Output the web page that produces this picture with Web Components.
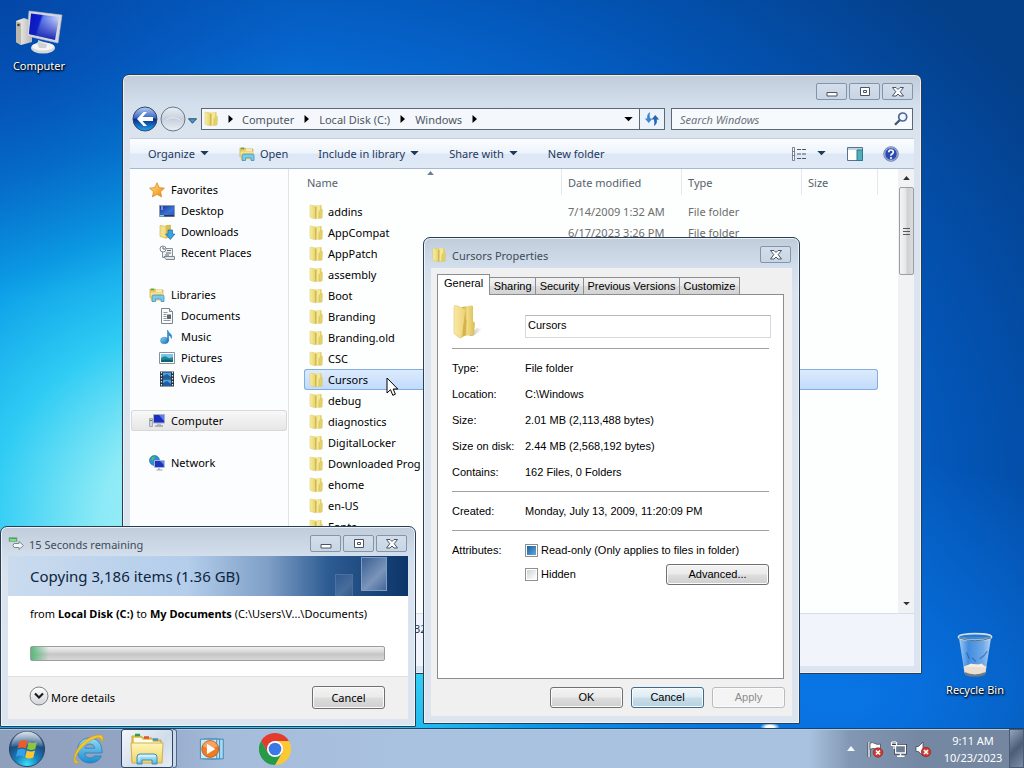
<!DOCTYPE html>
<html lang="en">
<head>
<meta charset="utf-8">
<title>Desktop</title>
<style>
  html, body { margin: 0; height: 100%; overflow: hidden; }
  body { font: 11px/21px "Noto Sans", "Open Sans", sans-serif; color: #000; }
</style>
</head>
<body>
<win-desktop></win-desktop>
<script>
const define = (name, css, html, setup) => {
  const t = document.createElement('template');
  t.innerHTML = `<style>*{box-sizing:border-box}${css}</style>${html}`;
  customElements.define(name, class extends HTMLElement {
    connectedCallback() {
      if (this.shadowRoot) return;
      const root = this.attachShadow({ mode: 'open' });
      root.append(t.content.cloneNode(true));
      if (setup) setup(this, root);
    }
  });
};

/* ---------- icons ---------- */
const ICONS = {
  folder: ['0 0 16 16', `<defs><linearGradient id="a" x2="1"><stop stop-color="#f8efa4"/><stop offset="1" stop-color="#e6d060"/></linearGradient><linearGradient id="b" x2="1" y2="1"><stop stop-color="#f3e696"/><stop offset="1" stop-color="#d0b43e"/></linearGradient></defs>
    <path d="M7 1.500l6-.5q.6 0 .6.700V5l1 .5-.3 8.500-1.300.5H8z" fill="url(#b)"/><path d="M9 1.400l3-.2V6l-1.500 1.500V14H8z" fill="#f3e898"/><path d="M11.300 7l2.400-1.500.6.500-.3 7.500-2.700 1z" fill="#e2d068"/><path d="M2 1.600q0-.6.600-.5l4.600.9q.6.100.6.700v11.600q0 .8-.7.500l-4.600-1.400q-.5-.2-.5-.7z" fill="url(#a)" stroke="#d9c66c" stroke-width=".5"/><path d="M7.800 3v11.500" stroke="#c0a038" stroke-width=".7"/>`],
  bigfolder: ['0 0 32 36', `<defs><linearGradient id="a" x2="1"><stop stop-color="#f8e9a4"/><stop offset="1" stop-color="#edd274"/></linearGradient><linearGradient id="b" x2="1"><stop stop-color="#c69b33"/><stop offset=".4" stop-color="#f1dc88"/><stop offset="1" stop-color="#dcbc52"/></linearGradient><linearGradient id="c" x2="1"><stop stop-color="#888" stop-opacity=".7"/><stop offset="1" stop-color="#aaa" stop-opacity="0"/></linearGradient></defs>
    <path d="M17 32l8-8 6 1-10 7z" fill="url(#c)"/><path d="M10 3l9-1.500 2 .5v15l2 2-1 12-11 1z" fill="url(#b)"/><path d="M2 3q0-2 2-1.500l8 3q1.500.5 1.500 2L10 33q-.5 1.500-2 1l-4.500-3Q2 30 2 28z" fill="url(#a)" stroke="#dfc66e" stroke-width=".6"/><path d="M13.500 6v8l1 3-1 14-3.500 2.500z" fill="#d7b247"/>`],
  explorer: ['0 0 36 32', `<defs><linearGradient id="a" y2="1" x2="0"><stop stop-color="#fff6b8"/><stop offset="1" stop-color="#efd266"/></linearGradient><linearGradient id="b" y2="1" x2="0"><stop stop-color="#d5f2fb"/><stop offset="1" stop-color="#4fb0dc"/></linearGradient></defs>
    <path d="M3 3h9l2 2h9l1 2h8v22H3z" fill="#e9c95c" stroke="#c9a43a"/><path d="M6 2h5" stroke="#2f9e4c" stroke-width="2.500"/><path d="M15 4.500h5" stroke="#d95338" stroke-width="2.500"/><path d="M24 6.500h5" stroke="#3c93d4" stroke-width="2.500"/><path d="M5 5h7l2 2h9l1 2h7v3H5z" fill="#fffef0"/><path d="M2 10h32l-1 20H3z" fill="url(#a)" stroke="#d3b04a"/><path d="M8 31v-7q0-3 3-3h14q3 0 3 3v7h-5v-4H13v4z" fill="url(#b)" stroke="#3a92c2"/><path d="M10 29v-6h16" stroke="#fff" fill="none" opacity=".7"/>`],
  star: ['0 0 16 16', `<defs><linearGradient id="a" x2="1" y2="1"><stop stop-color="#ffe87a"/><stop offset="1" stop-color="#f08410"/></linearGradient></defs><path d="M8 .8l2.200 4.800 5.200.6-3.900 3.500 1.100 5.200L8 12.300 3.400 14.900l1.100-5.200L.6 6.200l5.200-.6z" fill="url(#a)" stroke="#d9882b" stroke-width=".8"/>`],
  desktop: ['0 0 16 16', `<defs><linearGradient id="a" x2="1" y2="1"><stop stop-color="#16308e"/><stop offset=".6" stop-color="#3a74d6"/><stop offset="1" stop-color="#2453b6"/></linearGradient></defs><path d="M.5 2.500h15v11H.5z" fill="url(#a)" stroke="#8f9bb0"/><path d="M1 12h14v1.500H1z" fill="#27375c"/><path d="M1 12h4v1.500H1z" fill="#7fd0d8"/><path d="M2 4h2M2 6h2" stroke="#cfe0ff"/>`],
  downloads: ['0 0 16 16', `<path d="M1 1.500l6 .8v12L1 12.500z" fill="#f3e08a" stroke="#d0b24c" stroke-width=".6"/><path d="M7 1l5-.3V13l-5 1.500z" fill="#dcbd50"/><path d="M9 6h4.500v4H16l-4.700 5.500L6.600 10H9z" fill="#37a3e2" stroke="#1c6fae" stroke-width=".7"/>`],
  recent: ['0 0 16 16', `<path d="M3.500 3.500h10v9h-10z" fill="#eef2f5" stroke="#8b949c"/><path d="M5 11.500h10.500v3H7z" fill="#dfe5ea" stroke="#7e8890"/><circle cx="4" cy="4" r="3" fill="#fff" stroke="#7b8792"/><path d="M4 2v2h2M8 5.500h4M7 8h5M6 10h4" stroke="#5a6670" fill="none"/>`],
  libraries: ['0 0 16 16', `<path d="M1 2h5l1 1h7v8H1z" fill="#eccb5c" stroke="#c8a443" stroke-width=".7"/><path d="M2 2.500h3" stroke="#4aa85e" stroke-width="1.500"/><path d="M7 4h6" stroke="#fff8d8" stroke-width="1.500"/><path d="M1.500 5.500h13V14h-13z" fill="#f8e28a"/><path d="M3 14.500V9.500q0-1.500 1.500-1.500h9q1.500 0 1.500 1.500v5h-3V12H6.500v2.500z" fill="#7cc9e8" stroke="#3f93bb" stroke-width=".8"/>`],
  documents: ['0 0 16 16', `<path d="M2.500.5h8l3 3v12h-11z" fill="#fbfcfd" stroke="#7c858f"/><path d="M10.500.5v3h3" fill="#dde3e8" stroke="#7c858f"/><path d="M4.500 4.500h4M4.500 6.500h3M4.500 8.500h3M4.500 10.500h3M4.500 12.500h7" stroke="#8f979f"/><path d="M8 6.500h4v4.500H8z" fill="#5e6670"/>`],
  music: ['0 0 16 16', `<defs><linearGradient id="a" x2="1" y2="1"><stop stop-color="#8cd8f8"/><stop offset="1" stop-color="#1468b4"/></linearGradient></defs><ellipse cx="5.500" cy="11.500" rx="4" ry="3.300" fill="url(#a)" stroke="#2074b8" stroke-width=".5"/><path d="M8.500 12V1q1 2.500 3 4t.8 4.500q0-2.500-2.600-3.500V12z" fill="#2d8fd0" stroke="#2074b8" stroke-width=".5"/>`],
  pictures: ['0 0 16 16', `<path d="M.5 2.500h15v11H.5z" fill="#fff" stroke="#8a939b"/><path d="M2 4h12v8H2z" fill="#7cc4ee"/><path d="M2 8q4-3 6-1t6 0v5H2z" fill="#1e8a8e"/><path d="M2 10.500q5-2 12 0V12H2z" fill="#126072"/>`],
  videos: ['0 0 16 16', `<path d="M1 .5h14v15H1z" fill="#24303c"/><path d="M4 1.500h8v6H4zM4 8.500h8v6H4z" fill="#4aa2e4"/><path d="M4 5l4-2 4 3v1.500H4zM4 12l4-2 4 3v1.500H4z" fill="#1b5da6"/><path d="M2.500 1v14M13.500 1v14" stroke="#e8edf2" stroke-width="1.200" stroke-dasharray="1.500 1.500"/>`],
  pc: ['0 0 16 16', `<path d="M.5 5.500h3v8h-3z" fill="#cfd4da" stroke="#8b929a" stroke-width=".7"/><path d="M4.500 1.500h11v8.500h-11z" fill="#1c2ec0" stroke="#aab1bd"/><path d="M10 2l5 0v6z" fill="#5c7df0"/><path d="M8 10.500h4v2H8z" fill="#b5bcc5"/><path d="M6 13h8" stroke="#9aa2ac" stroke-width="1.500"/><path d="M1 7.500h2" stroke="#3a8f4a"/>`],
  network: ['0 0 16 16', `<circle cx="5.500" cy="5.500" r="5" fill="#2f8fd8" stroke="#1a5fa8" stroke-width=".6"/><path d="M2 3q2-2 4-1.500L5 4 3 6zM5 6l3 1-1 3-2-.5z" fill="#4fc05e"/><path d="M5.500 5.500h9.800v7H5.500z" fill="#1c36c4" stroke="#b4bcc8" stroke-width=".9"/><path d="M11 6l4 0v4z" fill="#6486ee"/><path d="M10 13v1.500M7.500 15h6" stroke="#99a2ae" stroke-width="1.200"/>`],
  computer: ['0 0 48 44', `<defs><linearGradient id="a" x2="1" y2=".3"><stop stop-color="#0a12b8"/><stop offset=".4" stop-color="#0d20d2"/><stop offset=".47" stop-color="#5b78ea"/><stop offset="1" stop-color="#d0d8fa"/></linearGradient><linearGradient id="b" x2="0" y2="1"><stop offset=".2" stop-color="#1020b0" stop-opacity="0"/><stop offset="1" stop-color="#1020b0"/></linearGradient><linearGradient id="c" x2="1"><stop stop-color="#f6f4ee"/><stop offset="1" stop-color="#b9bab8"/></linearGradient></defs>
    <path d="M1 11l8-3 8 3v21l-11 3-5-3z" fill="url(#c)"/><path d="M1 11l5 2v22l-5-3z" fill="#b9b7ae"/><circle cx="3.500" cy="15" r="1.300" fill="#3d4038"/><path d="M23 30l9 3v4h-9z" fill="#d3d5d6"/><ellipse cx="28" cy="38" rx="12" ry="5.500" fill="#d5d8da"/><ellipse cx="28" cy="36.500" rx="11" ry="4" fill="#f3f4f4"/><path d="M22 32l10 2-1 4h-7z" fill="#cfd2d4"/>
    <path d="M14 1l33 4-4 28-31-7z" fill="#d4d7dd" stroke="#b8bcc4" stroke-width=".6"/><path d="M16 3.500l28 3.500-4 23-26-6z" fill="url(#a)"/><path d="M16 3.500l28 3.500-4 23-26-6z" fill="url(#b)"/>`],
  bin: ['0 0 40 48', `<defs><linearGradient id="a" x2="1"><stop stop-color="#d5e8fa" stop-opacity=".8"/><stop offset=".3" stop-color="#7fb4ee" stop-opacity=".5"/><stop offset=".75" stop-color="#a8cdf4" stop-opacity=".65"/><stop offset="1" stop-color="#e4f1fc" stop-opacity=".8"/></linearGradient></defs>
    <path d="M3 5h34l-6 38q-11 5-22 0z" fill="url(#a)"/><path d="M8 36q12-5 24 0l-1 7q-11 4-22 0z" fill="#e9ded0"/><path d="M10 36l6-3 6 2 5-2 4 4" fill="#f6efe6"/><path d="M9 42q11 5 22 0l-.5 3q-10.500 4-21 0z" fill="#6f7c86"/><path d="M11 21l3 7M17 27l4 4M25 28q5-3 8-8" stroke="#1e52a4" stroke-width="1.300" fill="none" opacity=".6"/><ellipse cx="20" cy="5" rx="17.500" ry="3.500" fill="#3c81cc" fill-opacity=".7" stroke="#cfe0e8" stroke-width="1.600"/><path d="M3 6q17 6 34 0" stroke="#4c6b78" fill="none"/>`],
  copy: ['0 0 16 16', `<path d="M1 1.500h8v4H1z" fill="#35b44a" stroke="#8fa89a" stroke-width=".7"/><path d="M2 4h6" stroke="#d5f4da"/><path d="M6 7.500h5v-2l4.500 4-4.500 4v-2H6q-2-2 0-4z" fill="#f2f4f5" stroke="#7c8a8c"/>`],
  refresh: ['0 0 16 16', `<path d="M6 1Q2.500 3 3.200 7.500H.8l4 4.500 3.600-4.500H6Q5.300 4 6 1z" fill="#3a86d2"/><path d="M10 15q3.500-2 2.800-6.500h2.400l-4-4.500-3.600 4.500H10q.7 3.500 0 6.500z" fill="#2467b0"/>`],
  search: ['0 0 16 16', `<circle cx="9.700" cy="6" r="4" fill="#f4f9fe" stroke="#46689c" stroke-width="1.700"/><path d="M6.600 9.200L2 13.800" stroke="#3c5278" stroke-width="2.300"/>`],
  views: ['0 0 16 16', `<path d="M1.500 1.500h2v13h-2zM1.500 5.500h2M1.500 9.500h2" fill="#fff" stroke="#6c7480" stroke-width=".9"/><path d="M6 3.500h4M11 3.500h4M6 8h4M11 8h4M6 12.500h4M11 12.500h4" stroke="#4d5764" stroke-width="1.200"/>`],
  preview: ['0 0 16 16', `<path d="M.5 1.500h15v13H.5z" fill="#fff" stroke="#56728c"/><path d="M1 2h14v2H1z" fill="#bfd3e4"/><path d="M10 4h5.500v10.500H10z" fill="#4fb0bc" stroke="#2b7a8a"/>`],
  help: ['0 0 16 16', `<circle cx="8" cy="8" r="7.300" fill="#2c4bb0" stroke="#7f8fae"/><circle cx="8" cy="8" r="6.300" fill="none" stroke="#dde6f6" stroke-width=".8"/><path d="M5.700 6.300Q5.800 4 8 4t2.300 2q0 1.200-1.300 1.900T8 9.700" stroke="#fff" stroke-width="1.700" fill="none"/><circle cx="8" cy="12" r="1.100" fill="#fff"/>`],
  back: ['0 0 26 26', `<defs><linearGradient id="a" x2="0" y2="1"><stop stop-color="#b8cdf2"/><stop offset=".46" stop-color="#3a66c0"/><stop offset=".5" stop-color="#0b2a88"/><stop offset="1" stop-color="#1fa6ee"/></linearGradient></defs><circle cx="13" cy="13" r="12" fill="url(#a)" stroke="#31456e"/><path d="M11.500 6L5 13l6.500 7h3.500l-4.500-5H21v-4H10.500l4.500-5z" fill="#fff"/>`],
  forward: ['0 0 26 26', `<defs><linearGradient id="a" x2="0" y2="1"><stop stop-color="#e8eef6"/><stop offset=".5" stop-color="#c6d0dd"/><stop offset="1" stop-color="#e9eff5"/></linearGradient></defs><circle cx="13" cy="13" r="12" fill="url(#a)" stroke="#6b7786"/><path d="M6 14q7-5 14 0" stroke="#dfe6ee" fill="none"/>`],
  down: ['0 0 10 6', `<path d="M0 0h10L5 5z" fill="currentColor"/>`],
  navdown: ['0 0 10 6', `<path d="M.5.5h9L5 5.500z" fill="#39a2c8" stroke="#24406a"/>`],
  right: ['0 0 6 10', `<path d="M.5 1v8L5 5z" fill="#000"/>`],
  up: ['0 0 10 6', `<path d="M0 6h10L5 0z" fill="currentColor"/>`],
  min: ['0 0 14 12', `<path d="M2 6.500h10v3.500H2z" fill="#fff" stroke="#4a5468"/>`],
  max: ['0 0 14 12', `<path d="M2.500 1.500h9v8h-9z" fill="#fff" stroke="#4a5468"/><path d="M5.500 4.500h3v2h-3z" fill="#fff" stroke="#4a5468"/>`],
  close: ['0 0 14 12', `<path d="M1.500 1.500h3.500l2 2 2-2h3.500L9.200 5.700l3.300 4.300H9L7 8l-2 2H1.500l3.300-4.300z" fill="#fff" stroke="#4a5468"/>`],
  chevron: ['0 0 20 20', `<defs><linearGradient id="a" x2="0" y2="1"><stop stop-color="#fff"/><stop offset="1" stop-color="#d2d4d8"/></linearGradient></defs><circle cx="10" cy="10" r="9" fill="url(#a)" stroke="#7d828a"/><path d="M6 7.500l4 4 4-4" fill="none" stroke="#1c1c1c" stroke-width="2.200"/>`],
  cursor: ['0 0 14 20', `<path d="M1 1v15l3.500-3.300 2.300 5.600 2.600-1.100L7.200 12h4.600z" fill="#fff" stroke="#000"/>`],
  orb: ['0 0 40 40', `<defs><radialGradient id="a" cx=".5" cy=".95" r=".95"><stop stop-color="#3fe0f8"/><stop offset=".35" stop-color="#1782c0"/><stop offset=".7" stop-color="#1b4a7c"/><stop offset="1" stop-color="#6f8fb2"/></radialGradient><linearGradient id="b" x2="0" y2="1"><stop stop-color="#fff" stop-opacity=".75"/><stop offset="1" stop-color="#fff" stop-opacity=".1"/></linearGradient></defs><circle cx="20" cy="20" r="18.500" fill="url(#a)" stroke="#27415f"/><path d="M3.500 18a16.500 16.500 0 0 1 33 0q-16-5-33 0z" fill="url(#b)"/>
    <path d="M12 12q4.500-2.500 8.500 0l-1.700 7.500q-4.300-2.300-8.600 0z" fill="#ef5a28"/><path d="M21.700 12.600q4.300 2.300 8.800 0l-1.800 7.400q-4.300 2.200-8.600-.2z" fill="#8cc63c"/><path d="M10 21q4.300-2.300 8.600 0l-1.700 7.300q-4.300-2.300-8.500 0z" fill="#35a0e8"/><path d="M19.800 21.500q4.300 2.300 8.600 0l-1.700 7.500q-4.300 2.200-8.600-.2z" fill="#fcc72c"/>`],
  ie: ['0 0 34 32', `<defs><linearGradient id="a" x2="0" y2="1"><stop stop-color="#8fdcf8"/><stop offset="1" stop-color="#1b8ad0"/></linearGradient></defs><path d="M17.500 5C10 5 5.500 10.500 5.500 17.500S10.500 30 18 30c5.500 0 9.500-2.600 11.300-7h-6.800c-1 1.300-2.500 2-4.400 2-3 0-5.100-1.900-5.400-5H30C30.500 11 25.500 5 17.500 5zM12.800 15.200c.6-2.600 2.500-4.200 5.100-4.200s4.500 1.600 4.900 4.200z" fill="url(#a)" stroke="#2f7fb4" stroke-width=".8"/><path d="M3 30C-1 24 7 10 18 4.500 24 1.500 30 1 31 4q.8 2.500-1.500 6 .3-4-1.500-5Q25 3.500 17 8.500C9 14 3.500 22 3.500 26q0 3 4 2.500Q5 31 3 30z" fill="#f6c72a" stroke="#c99a1c" stroke-width=".6"/>`],
  wmp: ['0 0 30 26', `<path d="M9 2.500h17v21H9z" fill="#a9d8f0" stroke="#3a88b8"/><path d="M5 2.500h17v21H5z" fill="#b9e0f4" stroke="#3a88b8"/><path d="M1.500 2.500h17.500v21H1.500z" fill="#c8e8f6" stroke="#3a88b8"/><circle cx="12" cy="13" r="9" fill="#ef7b22" stroke="#c75a10"/><path d="M4 10a8.500 8.500 0 0 1 16 0q-8 4-16 0z" fill="#fff" opacity=".3"/><path d="M8.500 7.500v11l9-5.500z" fill="#fff"/>`],
  chrome: ['0 0 48 48', `<path d="M24 12h20.800A24 24 0 0 0 3.200 12l10.400 18z" fill="#e33b2e"/><path d="M34.400 30L24 48A24 24 0 0 0 44.800 12H24z" fill="#fcc934"/><path d="M13.600 30L3.200 12A24 24 0 0 0 24 48l10.400-18z" fill="#269a49"/><circle cx="24" cy="24" r="12" fill="#fff"/><circle cx="24" cy="24" r="9.500" fill="#3b78e7"/>`],
  flag: ['0 0 18 18', `<path d="M3 2v15" stroke="#3c4450" stroke-width="3"/><path d="M3 2v15" stroke="#fff" stroke-width="1.400"/><path d="M4 3q3-1 5 .5t5.500.5v6Q12 10.500 9.500 9T4 9.500z" fill="#fff" stroke="#48505e" stroke-width=".8"/><circle cx="12" cy="12.500" r="4.700" fill="#d23b32" stroke="#8d1f1c" stroke-width=".7"/><path d="M10 10.500l4 4M14 10.500l-4 4" stroke="#fff" stroke-width="1.700"/>`],
  lan: ['0 0 18 18', `<path d="M5.500 5.500h10v7.500h-10z" fill="#7f90a6" stroke="#303a48" stroke-width="3"/><path d="M5.500 5.500h10v7.500h-10z" fill="#6c7c92" stroke="#fff" stroke-width="1.300"/><path d="M10.500 13.500V16M7 16.300h7.500" stroke="#fff" stroke-width="1.400"/><path d="M1.500 2v3.500h5V2M4 5.500V9M3 1v3M5 1v3" stroke="#fff" stroke-width="1.200" fill="#303a48"/>`],
  volume: ['0 0 18 18', `<path d="M2 6.500h2.500L9 2v14l-4.500-4.500H2z" fill="#fff" stroke="#414a58" stroke-width=".8"/><circle cx="12" cy="12" r="4.700" fill="#d23b32" stroke="#8d1f1c" stroke-width=".7"/><path d="M10 10l4 4M14 10l-4 4" stroke="#fff" stroke-width="1.700"/>`],
};
define('sys-icon', `:host{display:block;flex:none;width:16px;height:16px}svg{display:block;width:100%;height:100%}`,
  ``, (el, root) => {
    const [box, body] = ICONS[el.getAttribute('name')];
    const t = document.createElement('template');
    t.innerHTML = `<svg viewBox="${box}" aria-hidden="true">${body}</svg>`;
    root.append(t.content);
  });

/* ---------- window frame ---------- */
define('win-frame', `
  :host{display:flex;flex-direction:column;border:1px solid #2b3d52;border-radius:7px 7px 1px 1px;padding:0 7px 7px;
    background:linear-gradient(#c0ccd9,#d3dfec 30px,#dbe4ee 60px,#dce5ef);box-shadow:inset 0 0 0 1px #eaf2fa}
  header{display:flex;align-items:flex-start;justify-content:space-between;height:var(--bar,29px);padding:8px 1px 0 0;flex:none}
  .title{display:flex;align-items:center;gap:5px;height:18px;color:#3e4b5a}
  .controls{display:flex;gap:2px}
  button{display:grid;place-items:center;width:31px;height:17px;padding:0;border:1px solid #8494aa;border-radius:2px;background:linear-gradient(#d3deea,#c8d5e3)}
  button sys-icon{width:14px;height:12px}
  main{flex:1;display:flex;flex-direction:column;min-height:0}`,
  `<header><div class="title"><slot name="icon"></slot><span></span></div><div class="controls"></div></header><main><slot></slot></main>`,
  (el, root) => {
    root.querySelector('span').textContent = el.getAttribute('heading') || '';
    root.querySelector('.controls').innerHTML = el.getAttribute('controls').split(' ')
      .map(n => `<button aria-label="${n}"><sys-icon name="${n}"></sys-icon></button>`).join('');
  });

/* ---------- explorer: address row ---------- */
define('address-row', `
  :host{display:flex;align-items:flex-start;height:34px;padding:2px 1px 0 2px;color:#3d4650}
  sys-icon.round{width:26px;height:26px}
  button{border:0;background:none;padding:0;font:inherit;color:inherit}
  .fwd{margin-left:2px}
  .hist{width:9px;height:6px;margin:12px 4px 0 2px}
  .path,.refresh,.search{height:22px;margin-top:2px;border:1px solid #5b6876}
  .path{flex:1;display:flex;align-items:center;background:#f4f8fd;padding-left:1px}
  .sep{width:6px;height:10px;margin:0 9px 0 10px}
  .sep.first{margin:0 8px 0 9px}
  .crumb{color:#4e565e;text-decoration:none}
  .drop{width:9px;height:5px;margin:0 6px 0 auto;color:#000}
  .refresh{display:grid;place-items:center;width:25px;border-left:0;background:#edf3fa}
  .search{display:flex;align-items:center;width:242px;margin-left:6px;background:#f7fafd;padding:0 3px 0 8px}
  input{flex:1;min-width:0;border:0;background:none;padding:0;font:inherit;outline:0}
  input::placeholder{color:#6b737c;font-style:italic;opacity:1}`,
  `<button aria-label="Back"><sys-icon class="round" name="back"></sys-icon></button>
   <button class="fwd" aria-label="Forward"><sys-icon class="round" name="forward"></sys-icon></button>
   <button aria-label="Recent pages"><sys-icon class="hist" name="navdown"></sys-icon></button>
   <div class="path"><sys-icon name="folder"></sys-icon>
     <sys-icon class="sep first" name="right"></sys-icon><a class="crumb" href="#computer">Computer</a>
     <sys-icon class="sep" name="right"></sys-icon><a class="crumb" href="#c">Local Disk (C:)</a>
     <sys-icon class="sep" name="right"></sys-icon><a class="crumb" href="#windows">Windows</a>
     <sys-icon class="sep" name="right"></sys-icon><sys-icon class="drop" name="down"></sys-icon></div>
   <button class="refresh" aria-label="Refresh"><sys-icon name="refresh"></sys-icon></button>
   <label class="search"><input type="text" placeholder="Search Windows" aria-label="Search Windows"><sys-icon name="search"></sys-icon></label>`);

define('command-bar', `
  :host{display:flex;align-items:center;height:31px;padding:0 15px 0 18px;color:#1e395b;border-bottom:1px solid #a9b8cf;border-top:1px solid #c2cddd;
    background:linear-gradient(#fbfdff,#eef4fc 48%,#dde7f5 52%,#e0eaf7)}
  button{display:flex;align-items:center;gap:5px;padding:0;border:0;background:none;font:inherit;color:inherit}
  .cmd{margin-right:30px}
  .d{width:9px;height:5px}
  .views{margin-left:auto;gap:10px}
  .views + button{margin:0 20px 0 21px}`,
  `<button class="cmd">Organize <sys-icon class="d" name="down"></sys-icon></button>
   <button class="cmd"><sys-icon name="libraries"></sys-icon>Open</button>
   <button class="cmd">Include in library <sys-icon class="d" name="down"></sys-icon></button>
   <button class="cmd">Share with <sys-icon class="d" name="down"></sys-icon></button>
   <button class="cmd">New folder</button>
   <button class="views" aria-label="Change your view"><sys-icon name="views"></sys-icon><sys-icon class="d" name="down"></sys-icon></button>
   <button aria-label="Preview pane"><sys-icon name="preview"></sys-icon></button>
   <button aria-label="Help"><sys-icon name="help"></sys-icon></button>`);

define('nav-item', `
  :host{display:block;padding-left:19px}
  :host([child]){padding-left:29px}
  :host([current]){margin:0 1px;padding-left:18px;border-radius:3px;background:linear-gradient(#f9f9f9,#e5e5e5);box-shadow:inset 0 0 0 1px #d9d9d9}
  a{display:flex;align-items:center;gap:6px;height:21px;color:#000;text-decoration:none}`,
  `<a href="#"><span><slot></slot></span></a>`,
  (el, root) => {
    const icon = document.createElement('sys-icon');
    icon.setAttribute('name', el.getAttribute('icon'));
    root.querySelector('a').prepend(icon);
  });

define('nav-pane', `
  :host{display:flex;flex-direction:column;gap:21px;width:159px;flex:none;padding-top:10px;background:#fcfdfe;border-right:1px solid #dfe4ea}`,
  `<section><nav-item icon="star">Favorites</nav-item><nav-item child icon="desktop">Desktop</nav-item><nav-item child icon="downloads">Downloads</nav-item><nav-item child icon="recent">Recent Places</nav-item></section>
   <section><nav-item icon="libraries">Libraries</nav-item><nav-item child icon="documents">Documents</nav-item><nav-item child icon="music">Music</nav-item><nav-item child icon="pictures">Pictures</nav-item><nav-item child icon="videos">Videos</nav-item></section>
   <section><nav-item current icon="pc">Computer</nav-item></section>
   <section><nav-item icon="network">Network</nav-item></section>`);

/* ---------- explorer: file list ---------- */
define('file-list', `
  :host{display:block;flex:1;min-width:0;overflow:hidden;padding:0 20px 0 15px;background:#fdfefe;position:relative}
  table{width:574px;table-layout:fixed;border-collapse:separate;border-spacing:0}
  th{height:26px;padding:0 6px;text-align:left;font-weight:400;color:#57616c;border-right:1px solid #e3e8ee}
  th:first-child{padding-left:3px}
  thead::after{content:"";display:block;height:6px}
  td{height:21px;padding:0 6px;color:#6d6d6d;white-space:nowrap}
  td:first-child{padding-left:4px;color:#000}
  .n{display:flex;align-items:center;gap:4px;height:19px}
  tr.sel td{background:linear-gradient(#dcebfc,#c1dbfc);border-top:1px solid #84acdd;border-bottom:1px solid #84acdd}
  tr.sel td:first-child{border-left:1px solid #84acdd;border-radius:3px 0 0 3px;padding-left:3px}
  tr.sel td:last-child{border-right:1px solid #84acdd;border-radius:0 3px 3px 0}
  .sort{position:absolute;left:138px;top:2px;width:7px;height:4px;color:#6b7f96}`,
  `<table><colgroup><col style="width:258px"><col style="width:120px"><col style="width:120px"><col></colgroup>
   <thead><tr><th>Name</th><th>Date modified</th><th>Type</th><th>Size</th></tr></thead><tbody></tbody></table><sys-icon class="sort" name="up"></sys-icon>`,
  (el, root) => {
    const rows = [['addins', '7/14/2009 1:32 AM', 'File folder'], ['AppCompat', '6/17/2023 3:26 PM', 'File folder'], ['AppPatch'], ['assembly'], ['Boot'],
      ['Branding'], ['Branding.old'], ['CSC'], ['Cursors'], ['debug'], ['diagnostics'], ['DigitalLocker'], ['Downloaded Prog'], ['ehome'], ['en-US'], ['Fonts']];
    root.querySelector('tbody').innerHTML = rows.map(([n, d = '', t = '']) =>
      `<tr${n === 'Cursors' ? ' class="sel"' : ''}><td><div class="n"><sys-icon name="folder"></sys-icon>${n}</div></td><td>${d}</td><td>${t}</td><td></td></tr>`).join('');
  });

define('scroll-bar', `
  :host{display:flex;flex-direction:column;align-items:center;width:16px;flex:none;background:#f1f2f3}
  sys-icon{width:7px;height:4px;margin:7px 0;color:#303030}
  .thumb{display:grid;place-content:center;gap:2px;width:15px;height:88px;border:1px solid #9a9da1;border-radius:2px;background:linear-gradient(90deg,#f4f4f4,#e6e6e7 45%,#cfd0d2 55%,#dcdcde)}
  i{width:7px;height:1px;background:#54595f}
  .fill{flex:1}`,
  `<sys-icon name="up"></sys-icon><div class="thumb"><i></i><i></i><i></i></div><div class="fill"></div><sys-icon name="down"></sys-icon>`);

define('explorer-body', `
  :host{flex:1;display:flex;flex-direction:column;min-height:0}
  .mid{flex:1;display:flex;min-height:0}
  footer{height:53px;border-top:1px solid #d5dfec;background:#f1f5fb;padding:4px 0 0 284px;color:#1e395b}`,
  `<address-row></address-row><command-bar></command-bar><div class="mid"><nav-pane></nav-pane><file-list></file-list><scroll-bar></scroll-bar></div><footer>32</footer>`);

/* ---------- push button ---------- */
define('push-button', `
  :host{display:block;width:73px;height:21px}
  :host([tall]){height:23px}
  button{width:100%;height:100%;padding:0;font:inherit;color:#000;border:1px solid #707070;border-radius:3px;background:linear-gradient(#f3f3f3,#ebebeb 48%,#dddddd 52%,#cfcfcf);box-shadow:inset 0 0 0 1px #fafafa}
  :host([default]) button{border-color:#3c6c8c;background:linear-gradient(#eef6fa,#dcecf4 48%,#c8dde8 52%,#b8d2e0)}
  button:disabled{color:#8d8d8d;border-color:#b9bcbf;background:#f4f4f4}`,
  `<button><slot></slot></button>`,
  (el, root) => { root.querySelector('button').disabled = el.hasAttribute('off'); });

/* ---------- properties dialog ---------- */
define('folder-properties', `
  :host{flex:1;display:flex;flex-direction:column;background:#f0f0f0;padding:6px 8px 6px 6px;font:11px/13px "Liberation Sans",Arial,sans-serif}
  [role=tablist]{display:flex;align-items:flex-end;width:303px;height:21px;position:relative;z-index:1;margin-bottom:-1px}
  [role=tab]{flex:1 0 auto;height:17px;padding:0 3px;margin:0 0 1px -1px;font:inherit;color:#000;border:1px solid #8a8d92;border-bottom:0;background:linear-gradient(#f2f2f2,#e9e9e9 48%,#dcdcdc 52%,#d3d3d3)}
  [role=tab][aria-selected=true]{flex:none;height:21px;padding:0 6px 3px;margin:0;background:#fff}
  .panel{flex:1;border:1px solid #8a8d92;background:#fff;padding:9px 14px}
  .name{display:grid;grid-template-columns:73px 1fr;align-items:center;height:44px}
  .name sys-icon{width:32px;height:36px;align-self:start}
  input[type=text]{width:246px;height:23px;border:1px solid #d6dade;border-top-color:#b4b8bc;padding:0 2px 3px;font:inherit}
  hr{border:0;border-top:1px solid #a0a0a0;margin:0;width:317px}
  dl{display:grid;grid-template-columns:73px 1fr;grid-auto-rows:26px;align-items:center;margin:0;white-space:nowrap}
  dl.main{padding:6px 0}
  dl.one{height:38px;align-content:center}
  dd{margin:0}
  .attrs{display:grid;grid-template-columns:73px 1fr;padding-top:11px}
  .attrs > span{line-height:16px}
  .opt{display:flex;align-items:center;gap:3px;height:16px;white-space:nowrap}
  .row{display:flex;justify-content:space-between;align-items:center;padding-top:6px;width:244px}
  input[type=checkbox]{appearance:none;width:13px;height:13px;margin:0;border:1px solid #8e8f8f;background:linear-gradient(135deg,#cfd3d6,#fff) content-box #f4f4f4;padding:1px}
  input:indeterminate{background:linear-gradient(135deg,#1a5f9e,#62a8dc) content-box #fff}
  .row push-button{width:103px}
  footer{display:flex;justify-content:flex-end;gap:8px;padding-top:8px;height:31px;margin-right:-1px}`,
  `<div role="tablist"><button role="tab" aria-selected="true">General</button><button role="tab">Sharing</button><button role="tab">Security</button><button role="tab">Previous Versions</button><button role="tab">Customize</button></div>
   <div class="panel">
     <div class="name"><sys-icon name="bigfolder"></sys-icon><input type="text" value="Cursors" aria-label="Folder name"></div><hr>
     <dl class="main"><dt>Type:</dt><dd>File folder</dd><dt>Location:</dt><dd>C:\\Windows</dd><dt>Size:</dt><dd>2.01 MB (2,113,488 bytes)</dd><dt>Size on disk:</dt><dd>2.44 MB (2,568,192 bytes)</dd><dt>Contains:</dt><dd>162 Files, 0 Folders</dd></dl><hr>
     <dl class="one"><dt>Created:</dt><dd>Monday, July 13, 2009, 11:20:09 PM</dd></dl><hr>
     <div class="attrs"><span>Attributes:</span><div>
       <label class="opt"><input type="checkbox" id="ro">Read-only (Only applies to files in folder)</label>
       <div class="row"><label class="opt"><input type="checkbox">Hidden</label><push-button>Advanced...</push-button></div></div></div>
   </div>
   <footer><push-button>OK</push-button><push-button default>Cancel</push-button><push-button off>Apply</push-button></footer>`,
  (el, root) => { root.getElementById('ro').indeterminate = true; });

/* ---------- copy progress ---------- */
define('copy-progress', `
  :host{flex:1;display:flex;flex-direction:column;background:#fff}
  h1{position:relative;flex:none;height:40px;margin:0;padding:0 22px;font-size:15px;line-height:41px;font-weight:400;color:#0d2540;overflow:hidden;
    background:linear-gradient(90deg,#cadbee,#b3cdeb 45%,#7f9fc6 65%,#2d5c92 80%,#0c3569)}
  h1 i{position:absolute;border:1px solid #7f9cc2;background:linear-gradient(135deg,#3b5f93,#7b95ba 60%,#44689b)}
  h1 i.a{right:21px;top:1px;width:26px;height:34px}
  h1 i.b{right:55px;top:18px;width:18px;height:24px;opacity:.4}
  .body{flex:1;padding:7px 22px 0;white-space:nowrap}
  p{margin:0 0 22px}
  .bar{width:355px;height:15px;border:1px solid #9b9d9f;border-radius:2px;background:linear-gradient(#f0f0f0,#dadada 35%,#c6c6c6 55%,#d8d8d8)}
  .bar i{display:block;width:18px;height:100%;background:linear-gradient(90deg,#58b97a,#58b97a00)}
  footer{display:flex;justify-content:space-between;align-items:center;height:43px;padding:0 23px 1px 21px;border-top:1px solid #dfdfdf;background:#f0f0f0}
  .more{display:flex;align-items:center;gap:2px;height:25px;padding:0 0 4px;border:0;background:none;font:inherit;color:#000}
  .more sys-icon{width:20px;height:20px}
  .more span{padding-top:4px}`,
  `<h1>Copying 3,186 items (1.36 GB)<i class="a"></i><i class="b"></i></h1>
   <div class="body"><p>from <b>Local Disk (C:)</b> to <b>My Documents</b> (C:\\Users\\V...\\Documents)</p>
   <div class="bar" role="progressbar" aria-label="Copy progress" aria-valuenow="3"><i></i></div></div>
   <footer><button class="more"><sys-icon name="chevron"></sys-icon><span>More details</span></button><push-button tall>Cancel</push-button></footer>`);

/* ---------- desktop icon ---------- */
define('desktop-icon', `
  :host{display:flex;flex-direction:column;align-items:center;gap:1px;width:76px;color:#fff;text-shadow:0 1px 2px #000,1px 1px 2px #000}`,
  `<slot name="art"></slot><span><slot></slot></span>`);

/* ---------- taskbar ---------- */
define('task-bar', `
  :host{display:flex;align-items:stretch;height:40px;color:#fff;border-top:1px solid #1c4264;box-shadow:inset 0 1px #a8ccec;
    background:linear-gradient(90deg,#8ea0bc,#93a5c4 14%,#a5bcdb 22%,#a9c2df 40%,#a9c2df 79%,#8297b3 83%,#7588a3 90%,#74869f)}
  button{display:grid;place-items:center;width:62px;padding:0;border:0;background:none}
  button.start{width:54px}
  .start sys-icon{width:38px;height:38px}
  .ie{width:34px;height:32px;margin-left:8px}
  .active{width:52px;margin-left:5px;border:1px solid #2f4560;border-radius:3px;background:linear-gradient(135deg,#f3f6fa,#cfdceb 60%,#e6edf5)}
  .active sys-icon{width:36px;height:32px}
  .stack{width:4px;border:1px solid #50688a;border-left:0;border-radius:0 3px 3px 0;background:#c9d8ea}
  .media{width:72px}
  .wmp{width:28px;height:26px}
  .web{width:52px}
  .chrome{width:32px;height:32px}
  .tray{display:flex;align-items:center;gap:6px;margin-left:auto}
  .tray .up{width:8px;height:5px;margin-right:5px;color:#f4f8ff}
  .tray .t{width:18px;height:18px}
  time{display:block;width:68px;margin:0 2px 0 1px;text-align:center;line-height:17px}
  .peek{width:15px;border:1px solid #4a5c74;background:linear-gradient(135deg,#93a5bd,#4c5d77 50%,#7c8ea8)}`,
  `<button class="start" aria-label="Start"><sys-icon name="orb"></sys-icon></button>
   <button aria-label="Internet Explorer"><sys-icon class="ie" name="ie"></sys-icon></button>
   <button class="active" aria-label="Windows Explorer"><sys-icon name="explorer"></sys-icon></button><span class="stack"></span>
   <button class="media" aria-label="Media Player"><sys-icon class="wmp" name="wmp"></sys-icon></button>
   <button class="web" aria-label="Chrome"><sys-icon class="chrome" name="chrome"></sys-icon></button>
   <div class="tray"><sys-icon class="up" name="up"></sys-icon><sys-icon class="t" name="flag"></sys-icon><sys-icon class="t" name="lan"></sys-icon><sys-icon class="t" name="volume"></sys-icon><time>9:11 AM<br>10/23/2023</time></div>
   <button class="peek" aria-label="Show desktop"></button>`);

/* ---------- desktop: free canvas with windows and icons, taskbar below ---------- */
define('win-desktop', `
  :host{display:flex;flex-direction:column;height:100vh;overflow:hidden;
    background:radial-gradient(ellipse 10px 4px at 770px 727px,#fff 40%,#fff0),radial-gradient(circle 300px at 0 0,#0340a0b0,#0340a000),radial-gradient(ellipse 420px 240px at 860px 700px,#0a7cf0c0,#0a7cf000),
      radial-gradient(ellipse 1000px 800px at 250px 520px,#b8f6fc,#8ceaf6 15%,#30ccf4 26%,#0ca0e8 38%,#067cd8 49%,#0664cc 59%,#0354b4 72%,#043f8a 94%)}
  .canvas{flex:1;position:relative;min-height:0}
  .canvas > *{position:absolute}
  .pc{left:1px;top:10px}.pc sys-icon{width:48px;height:44px}
  .bin{right:11px;bottom:28px}.bin sys-icon{width:38px;height:46px}
  .explorer{left:122px;top:74px;width:800px;height:600px}
  .props{left:423px;top:237px;width:377px;height:487px;--bar:30px}
  .copy{left:0;top:526px;width:416px;height:201px}
  .cursor{left:386px;top:377px;width:14px;height:20px}`,
  `<div class="canvas">
     <desktop-icon class="pc"><sys-icon slot="art" name="computer"></sys-icon>Computer</desktop-icon>
     <desktop-icon class="bin"><sys-icon slot="art" name="bin"></sys-icon>Recycle Bin</desktop-icon>
     <win-frame class="explorer" controls="min max close"><explorer-body></explorer-body></win-frame>
     <win-frame class="props" heading="Cursors Properties" controls="close"><sys-icon slot="icon" name="folder"></sys-icon><folder-properties></folder-properties></win-frame>
     <win-frame class="copy" heading="15 Seconds remaining" controls="min max close"><sys-icon slot="icon" name="copy"></sys-icon><copy-progress></copy-progress></win-frame>
     <sys-icon class="cursor" name="cursor"></sys-icon>
   </div><task-bar></task-bar>`);
</script>
</body>
</html>
